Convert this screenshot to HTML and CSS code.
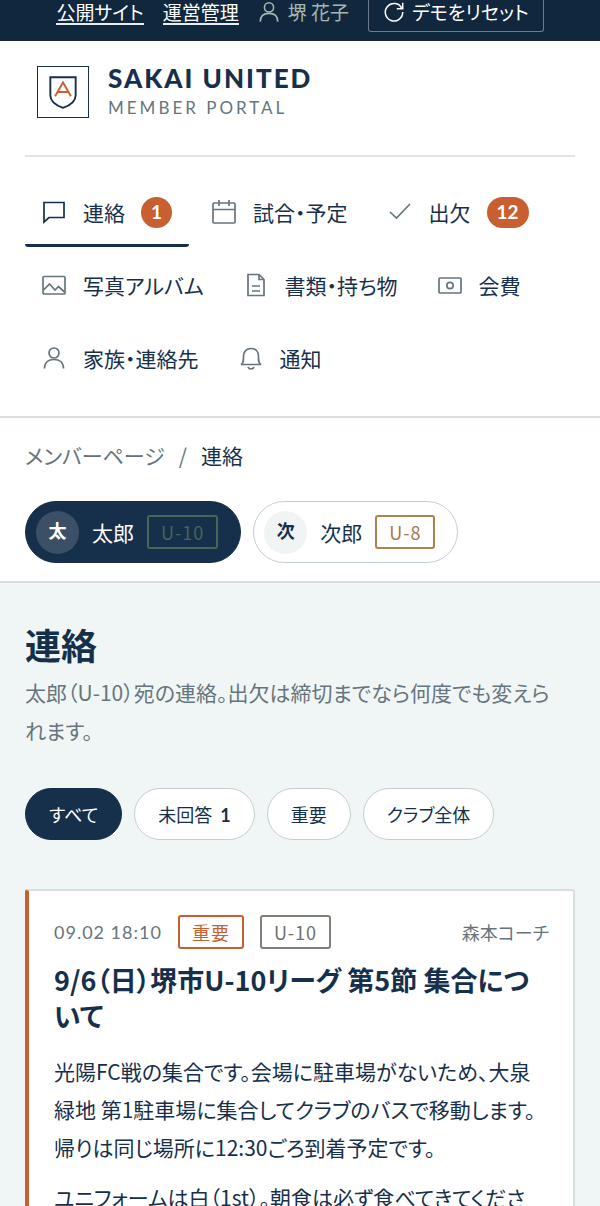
FILE: index.html
```
<!DOCTYPE html>
<html lang="ja">
<head>
    <meta charset="UTF-8">
    <meta name="viewport" content="width=device-width, initial-scale=1.0">
    <title>連絡 | SAKAI UNITED MEMBER PORTAL</title>
    <link rel="stylesheet" href="styles.css">
</head>
<body>
    <div class="topbar">
        <a href="#">公開サイト</a>
        <a href="#">運営管理</a>
        <span class="user">
            <svg class="icon" viewBox="0 0 24 24"><circle cx="12" cy="7" r="5"/><path d="M2.500 22.500c0-6 4-9 9.500-9s9.500 3 9.500 9"/></svg>
            堺 花子
        </span>
        <button class="reset" type="button">
            <svg class="icon" viewBox="0 0 24 24"><path d="M20.500 8A9.500 9.500 0 1 0 21.500 12M21.500 2v6.500H15"/></svg>
            デモをリセット
        </button>
    </div>

    <header class="header">
        <a class="brand" href="#">
            <span class="brand-mark">
                <svg viewBox="0 0 32 36"><path class="shield" d="M4 4h24v17c0 6-5 9.500-12 12C9 30.500 4 27 4 21z"/><path class="letter" d="M8.500 22 16 9l7.500 13M11.500 18h9"/></svg>
            </span>
            <span class="brand-text">
                <span class="brand-name">SAKAI UNITED</span>
                <span class="brand-sub">MEMBER PORTAL</span>
            </span>
        </a>
        <nav class="tabs">
            <a class="tab active" href="#">
                <svg class="icon" viewBox="0 0 24 24"><path d="M2 2.500h20v15H7l-5 4.500z"/></svg>
                連絡 <span class="count">1</span>
            </a>
            <a class="tab" href="#">
                <svg class="icon" viewBox="0 0 24 24"><rect x="1" y="3" width="22" height="20" rx="1"/><path d="M1 9.500h22M7 0v6M17 0v6"/></svg>
                試合・予定
            </a>
            <a class="tab" href="#">
                <svg class="icon" viewBox="0 0 24 24"><path d="m2 12 6.500 6L22 4"/></svg>
                出欠 <span class="count">12</span>
            </a>
            <a class="tab" href="#">
                <svg class="icon" viewBox="0 0 24 24"><rect x="1" y="3.500" width="22" height="17.500" rx="1"/><path d="m1.500 17 6-6 5.500 6 3.500-3.500 6 5.500"/></svg>
                写真アルバム
            </a>
            <a class="tab" href="#">
                <svg class="icon" viewBox="0 0 24 24"><path d="M4 1.500h11l5 5v16H4zM15 1.500v5h5M8 13h8M8 18h8"/></svg>
                書類・持ち物
            </a>
            <a class="tab" href="#">
                <svg class="icon" viewBox="0 0 24 24"><rect x="1" y="5" width="22" height="15" rx="1"/><circle cx="12" cy="12.500" r="3.200"/></svg>
                会費
            </a>
            <a class="tab" href="#">
                <svg class="icon" viewBox="0 0 24 24"><circle cx="12" cy="7" r="5"/><path d="M2.500 22.500c0-6 4-9 9.500-9s9.500 3 9.500 9"/></svg>
                家族・連絡先
            </a>
            <a class="tab" href="#">
                <svg class="icon" viewBox="0 0 24 24"><path d="M2 18.500c2.500-1 2.500-4 2.500-8 0-5 3-8 7.500-8s7.500 3 7.500 8c0 4 0 7 2.500 8zM9 21c.5 1.500 1.500 2 3 2s2.500-.5 3-2"/></svg>
                通知
            </a>
        </nav>
    </header>

    <section class="context">
        <div class="breadcrumb">
            <a href="#">メンバーページ</a>
            <span>/</span>
            <strong>連絡</strong>
        </div>
        <div class="members">
            <button class="member selected" type="button">
                <span class="avatar">太</span>太郎<span class="tag tag-u10">U-10</span>
            </button>
            <button class="member" type="button">
                <span class="avatar">次</span>次郎<span class="tag tag-u8">U-8</span>
            </button>
        </div>
    </section>

    <main class="main">
        <h1>連絡</h1>
        <p class="lead">太郎（U-10）宛の連絡。出欠は締切までなら何度でも変えられます。</p>
        <div class="filters">
            <button class="filter selected" type="button">すべて</button>
            <button class="filter" type="button">未回答 <b>1</b></button>
            <button class="filter" type="button">重要</button>
            <button class="filter" type="button">クラブ全体</button>
        </div>

        <article class="card">
            <div class="meta">
                <time>09.02 18:10</time>
                <span class="tag tag-important">重要</span>
                <span class="tag">U-10</span>
                <span class="author">森本コーチ</span>
            </div>
            <h2>9/6（日）堺市U-10リーグ 第5節 集合について</h2>
            <p>光陽FC戦の集合です。会場に駐車場がないため、大泉緑地 第1駐車場に集合してクラブのバスで移動します。帰りは同じ場所に12:30ごろ到着予定です。</p>
            <p>ユニフォームは白（1st）。朝食は必ず食べてきてください。</p>
        </article>
    </main>
</body>
</html>
```
FILE: styles.css
```
* {
    box-sizing: border-box;
}
body {
    margin: 0;
    height: 100vh;
    overflow: hidden;
    background: #f0f6f6;
    color: #16304b;
    font-family: "Noto Sans CJK JP", sans-serif;
    font-size: 21px;
    font-feature-settings: "palt";
}
a {
    color: inherit;
    text-decoration: none;
}
button {
    font: inherit;
    font-feature-settings: inherit;
    color: inherit;
    cursor: pointer;
}
.icon {
    width: 24px;
    height: 24px;
    flex: none;
    fill: none;
    stroke: currentColor;
    stroke-width: 1.7;
}

/* Top bar */
.topbar {
    display: flex;
    justify-content: center;
    align-items: flex-start;
    gap: 19px;
    height: 41px;
    background: #11273e;
    color: #fff;
    font-size: 19px;
    line-height: 23px;
    white-space: nowrap;
}
.topbar a {
    border-bottom: 2px solid #e6eef0;
}
.topbar .icon {
    width: 22px;
    height: 22px;
}
.user {
    display: flex;
    align-items: center;
    gap: 8px;
    color: #a3b8ad;
}
.reset {
    display: flex;
    align-items: center;
    gap: 7px;
    height: 32px;
    padding: 0 14px 8px;
    border: 1px solid #6c7c8d;
    border-top: 0;
    border-radius: 0 0 3px 3px;
    background: none;
}

/* Header */
.header {
    padding: 0 25px 23px;
    background: #fff;
    border-bottom: 2px solid #d9e0e1;
}
.brand {
    display: flex;
    align-items: center;
    gap: 19px;
    height: 116px;
    padding: 0 12px 12px;
    border-bottom: 2px solid #dfe5e5;
}
.brand-mark {
    display: flex;
    align-items: center;
    justify-content: center;
    width: 52px;
    height: 52px;
    border: 1px solid #16304b;
}
.brand-mark svg {
    width: 34px;
    height: 38px;
    fill: none;
    stroke-width: 1.8;
}
.shield {
    stroke: #16304b;
}
.letter {
    stroke: #c85f30;
}
.brand-text {
    display: flex;
    flex-direction: column;
    font-family: Lato, sans-serif;
}
.brand-name {
    font-size: 26px;
    font-weight: 900;
    line-height: 32px;
    letter-spacing: 2px;
}
.brand-sub {
    font-size: 17px;
    line-height: 28px;
    letter-spacing: 3px;
    color: #66757d;
}
.tabs {
    display: flex;
    flex-wrap: wrap;
    gap: 6px;
    padding-top: 23px;
}
.tab {
    display: flex;
    align-items: center;
    height: 67px;
    padding: 0 17px;
    border-bottom: 3px solid transparent;
    border-radius: 3px;
    white-space: nowrap;
}
.tab .icon {
    margin-right: 17px;
    color: #66757d;
}
.tab.active {
    border-color: #16304b;
}
.tab.active .icon {
    color: #16304b;
}
.count {
    min-width: 31px;
    height: 31px;
    margin-left: 16px;
    padding: 0 10px;
    border-radius: 16px;
    background: #c85f30;
    color: #fff;
    font-family: Lato, sans-serif;
    font-size: 19px;
    font-weight: 700;
    line-height: 30px;
    text-align: center;
}

/* Breadcrumb and member switch */
.context {
    padding: 18px 25px 18px;
    background: #fff;
    border-bottom: 2px solid #d5dddf;
}
.breadcrumb {
    display: flex;
    gap: 14px;
    margin-bottom: 27px;
    line-height: 38px;
    color: #66757d;
}
.breadcrumb strong {
    font-weight: 400;
    color: #16304b;
}
.members {
    display: flex;
    gap: 12px;
}
.member {
    display: flex;
    align-items: center;
    gap: 13px;
    height: 62px;
    padding: 0 22px 0 10px;
    border: 1px solid #c5ced1;
    border-radius: 31px;
    background: #fff;
}
.member.selected,
.filter.selected {
    border-color: #16304b;
    background: #16304b;
    color: #fff;
}
.avatar {
    width: 43px;
    height: 43px;
    border-radius: 50%;
    background: #f0f4f5;
    font-size: 18px;
    font-weight: 700;
    line-height: 38px;
    text-align: center;
}
.selected .avatar {
    background: #3b4f66;
}
.tag {
    height: 34px;
    padding: 0 12px;
    border: 2px solid #7b8278;
    border-radius: 3px;
    color: #6b7368;
    font-size: 18px;
    line-height: 31px;
    letter-spacing: 1px;
}
.tag-u10 {
    border-color: #4a6458;
    color: #4a6458;
}
.tag-u8 {
    border-color: #a98350;
    color: #a47c48;
}
.tag-important {
    border-color: #c85f30;
    color: #c85f30;
}

/* Main */
.main {
    padding: 36px 25px;
}
h1 {
    margin: 0 0 4px;
    font-size: 36px;
    line-height: 50px;
}
.lead {
    margin: 0 0 39px;
    padding-right: 12px;
    line-height: 38px;
    color: #66757d;
}
.filters {
    display: flex;
    gap: 12px;
    margin-bottom: 49px;
}
.filter {
    height: 52px;
    padding: 0 23px;
    border: 1px solid #c5ced1;
    border-radius: 26px;
    background: #fff;
    font-size: 18px;
}
.filter b {
    margin-left: 4px;
    font-family: Lato, sans-serif;
}
.card {
    padding: 24px 24px 30px 25px;
    border: 2px solid #d8dfe0;
    border-left: 4px solid #c85f30;
    border-radius: 3px;
    background: #fff;
}
.meta {
    display: flex;
    align-items: center;
    gap: 16px;
    margin-bottom: 13px;
    font-size: 18px;
    color: #66757d;
}
.meta time {
    font-family: Lato, sans-serif;
    letter-spacing: 1px;
}
.author {
    margin-left: auto;
}
h2 {
    margin: 0 0 18px;
    font-size: 27px;
    line-height: 36px;
}
.card p {
    margin: 0 0 12px;
    line-height: 38px;
}
```
